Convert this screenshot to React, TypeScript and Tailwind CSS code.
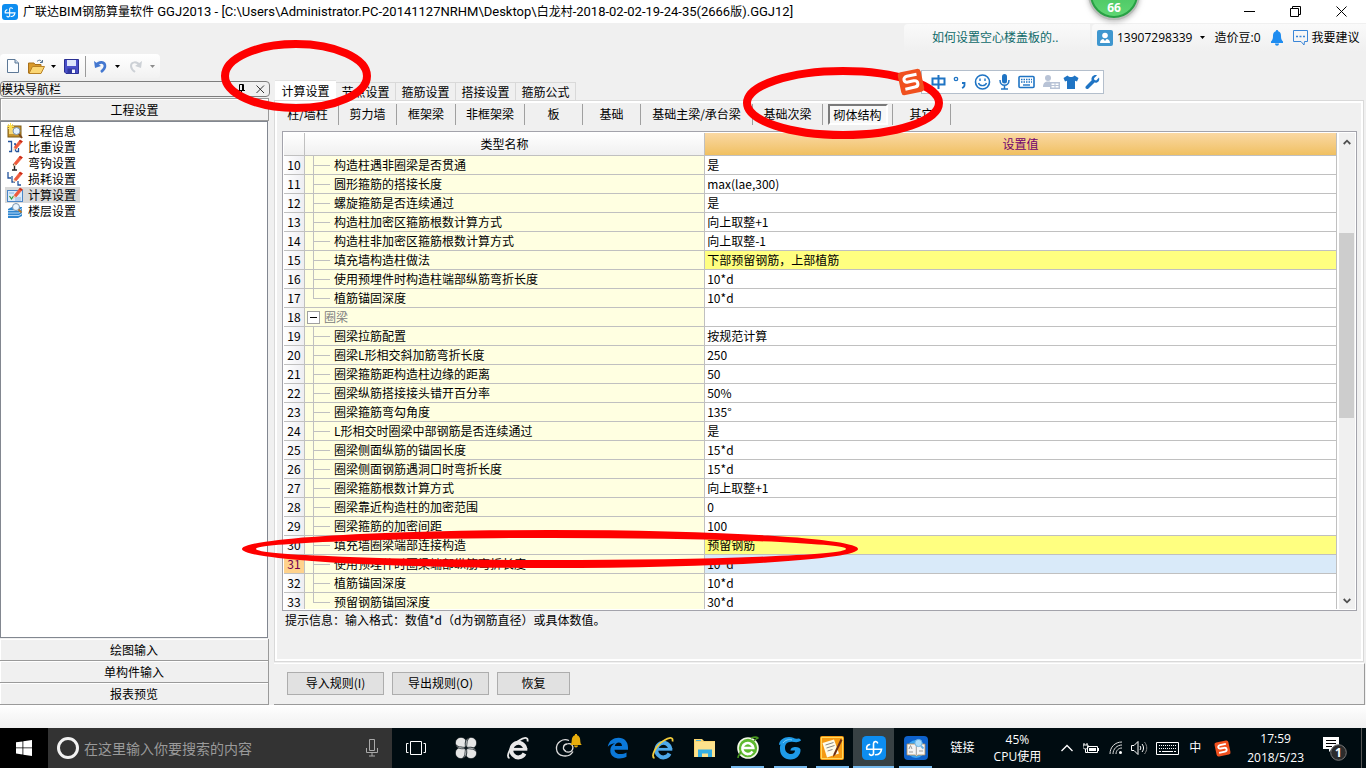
import { useState } from "react"
import type { ReactNode } from "react"

type Row = {
  no: number
  name: string
  value: string
  group?: boolean
  last?: boolean
  changed?: boolean
}

const rows: Row[] = [
  { no: 10, name: "构造柱遇非圈梁是否贯通", value: "是" },
  { no: 11, name: "圆形箍筋的搭接长度", value: "max(lae,300)" },
  { no: 12, name: "螺旋箍筋是否连续通过", value: "是" },
  { no: 13, name: "构造柱加密区箍筋根数计算方式", value: "向上取整+1" },
  { no: 14, name: "构造柱非加密区箍筋根数计算方式", value: "向上取整-1" },
  { no: 15, name: "填充墙构造柱做法", value: "下部预留钢筋，上部植筋", changed: true },
  { no: 16, name: "使用预埋件时构造柱端部纵筋弯折长度", value: "10*d" },
  { no: 17, name: "植筋锚固深度", value: "10*d", last: true },
  { no: 18, name: "圈梁", value: "", group: true },
  { no: 19, name: "圈梁拉筋配置", value: "按规范计算" },
  { no: 20, name: "圈梁L形相交斜加筋弯折长度", value: "250" },
  { no: 21, name: "圈梁箍筋距构造柱边缘的距离", value: "50" },
  { no: 22, name: "圈梁纵筋搭接接头错开百分率", value: "50%" },
  { no: 23, name: "圈梁箍筋弯勾角度", value: "135°" },
  { no: 24, name: "L形相交时圈梁中部钢筋是否连续通过", value: "是" },
  { no: 25, name: "圈梁侧面纵筋的锚固长度", value: "15*d" },
  { no: 26, name: "圈梁侧面钢筋遇洞口时弯折长度", value: "15*d" },
  { no: 27, name: "圈梁箍筋根数计算方式", value: "向上取整+1" },
  { no: 28, name: "圈梁靠近构造柱的加密范围", value: "0" },
  { no: 29, name: "圈梁箍筋的加密间距", value: "100" },
  { no: 30, name: "填充墙圈梁端部连接构造", value: "预留钢筋", changed: true },
  { no: 31, name: "使用预埋件时圈梁端部纵筋弯折长度", value: "10*d" },
  { no: 32, name: "植筋锚固深度", value: "10*d" },
  { no: 33, name: "预留钢筋锚固深度", value: "30*d", last: true },
]

const tabs = ["计算设置", "节点设置", "箍筋设置", "搭接设置", "箍筋公式"]

const categories = [
  { label: "柱/墙柱", width: "w-[62px]" },
  { label: "剪力墙", width: "w-[58px]" },
  { label: "框架梁", width: "w-[59px]" },
  { label: "非框架梁", width: "w-[69px]" },
  { label: "板", width: "w-[58px]" },
  { label: "基础", width: "w-[58px]" },
  { label: "基础主梁/承台梁", width: "w-[112px]" },
  { label: "基础次梁", width: "w-[70px]" },
  { label: "砌体结构", width: "w-[70px]" },
  { label: "其它", width: "w-[58px]" },
]

const Pencil = () => (
  <>
    <path d="M7 8.500 13 1l2.500 1.500L9 10z" fill="#ef5a3c" stroke="#ef5a3c" strokeWidth=".8" />
    <path d="M13 1l2.500 1.500-1 1.200L12 2.300z" fill="#c22a1a" />
    <path d="M7 8.500 9 10l-3 1.800z" fill="#f3c9a0" />
  </>
)

const navItems: { label: string; icon: ReactNode }[] = [
  {
    label: "工程信息",
    icon: (
      <>
        <rect x="1" y="3" width="13" height="11" fill="#c8962e" stroke="#7d5a14" />
        <rect x="2" y="5" width="7" height="6" fill="#f6d878" />
        <circle cx="9.500" cy="8" r="3.500" fill="#e4f2fd" stroke="#7b93ad" />
        <path d="M12 11l3 4" stroke="#7a4a1c" strokeWidth="2" />
        <path d="M3.500 0v7M0 3.500h7M1 1l5 5M6 1L1 6" stroke="#ffe14a" strokeWidth="1" />
      </>
    ),
  },
  {
    label: "比重设置",
    icon: (
      <>
        <path d="M1 2.500h3.500v10H2M8.500 5v7.500M7 5h2M9 12.500h2.500V9" fill="none" stroke="#24549c" strokeWidth="1.300" />
        <Pencil />
      </>
    ),
  },
  {
    label: "弯钩设置",
    icon: (
      <>
        <path d="M5 15h5M7.500 15V8M6 10l3-1" fill="none" stroke="#222" strokeWidth="1.400" />
        <Pencil />
      </>
    ),
  },
  {
    label: "损耗设置",
    icon: (
      <>
        <path d="M1 1v6h3M5 5v6h3M11 10v4h3" fill="none" stroke="#24549c" strokeWidth="1.300" />
        <Pencil />
      </>
    ),
  },
  {
    label: "计算设置",
    icon: (
      <>
        <rect x="0.500" y="3.500" width="15" height="11" fill="#dcebfa" stroke="#4a86c8" />
        <path d="M2 6h5M8 11h6M8 13h6" stroke="#8ab4e0" />
        <path d="M2.500 9l2 3 2-3" fill="none" stroke="#2e9a3c" strokeWidth="1.200" />
        <Pencil />
      </>
    ),
  },
  {
    label: "楼层设置",
    icon: (
      <>
        <path d="M1 6l4-2h10v9l-4 2H1z" fill="#2f86d0" />
        <path d="M1 7.500h11l3-2M1 10h11l3-2M1 12.500h11l3-2" fill="none" stroke="#d4ecff" strokeWidth=".8" />
        <circle cx="9" cy="4" r="3.500" fill="#eaf5fe" stroke="#7b93ad" />
        <path d="M11.500 6.500l3 3" stroke="#b5762a" strokeWidth="2" />
      </>
    ),
  },
]

function CrossLogo({ className }: { className: string }) {
  return (
    <svg viewBox="0 0 24 24" className={className} aria-hidden="true">
      <rect width="24" height="24" rx="4.500" fill="#0d8df0" />
      <path
        d="M7.500 8.600A4 4 0 0 0 4.800 13.300H19.500A6.500 6.500 0 0 1 13.500 18.800M15.500 6.800A2.100 2.100 0 0 0 11.500 7.500V17.500A2.200 2.200 0 0 1 7.400 18.200"
        fill="none"
        stroke="#fff"
        strokeWidth="1.600"
        strokeLinecap="round"
      />
    </svg>
  )
}

function SogouLogo({ className }: { className: string }) {
  return (
    <svg viewBox="0 0 24 24" className={className} aria-hidden="true">
      <g transform="rotate(-12 12 12)">
        <rect x="2" y="2" width="20" height="20" rx="3" fill="#f0501e" />
        <path
          d="M18 6.500H9.500c-4 0-4 5 0 5h5c4 0 4 5.500 0 5.500H6"
          fill="none"
          stroke="#fff"
          strokeWidth="2.600"
        />
      </g>
    </svg>
  )
}

function Caret({ color = "#000" }: { color?: string }) {
  return (
    <svg viewBox="0 0 5 3" className="h-[3px] w-[5px] shrink-0" aria-hidden="true">
      <path d="M0 0h5L2.500 3z" fill={color} />
    </svg>
  )
}

function TitleBar() {
  return (
    <header className="flex h-[23px] shrink-0 items-center bg-white pl-[2px]">
      <CrossLogo className="h-4 w-4 shrink-0" />
      <h1 className="ml-[5px] flex-1 truncate font-['Roboto','Noto_Sans_CJK_SC',sans-serif] text-[13px] leading-[20px]">
        <span className="text-[12px]">广联达</span>BIM<span className="text-[12px]">钢筋算量软件</span> GGJ2013 -
        [C:\Users\Administrator.PC-20141127NRHM\Desktop\<span className="text-[12px]">白龙村</span>
        -2018-02-02-19-24-35(2666<span className="text-[12px]">版</span>).GGJ12]
      </h1>
      <button aria-label="最小化" className="flex h-5 w-[45px] items-center justify-center">
        <svg viewBox="0 0 11 11" className="h-[11px] w-[11px]">
          <path d="M0 5.500h11" stroke="#000" />
        </svg>
      </button>
      <button aria-label="还原" className="flex h-5 w-[46px] items-center justify-center">
        <svg viewBox="0 0 11 11" className="h-[11px] w-[11px]" fill="none" stroke="#000">
          <path d="M.5 2.500h8v8h-8zM2.500 2.500v-2h8v8h-2" />
        </svg>
      </button>
      <button aria-label="关闭" className="mr-[2px] flex h-5 w-[46px] items-center justify-center">
        <svg viewBox="0 0 11 11" className="h-[11px] w-[11px]">
          <path d="M.5.500l10 10M10.500.500l-10 10" stroke="#000" />
        </svg>
      </button>
    </header>
  )
}

function AccountRow() {
  return (
    <div className="flex h-[31px] shrink-0 justify-end gap-[2px] pt-px font-['Open_Sans','Noto_Sans_CJK_SC',sans-serif]">
      <a href="#help" className="h-[27px] w-[186px] rounded-tl bg-linear-to-b from-[#fafafa] to-[#f0f0f0] pl-7 leading-[27px] text-[#0e6a6a]">
        如何设置空心楼盖板的..
      </a>
      <div className="flex h-[27px] w-[274px] items-center rounded-tl bg-linear-to-b from-[#fafafa] to-[#f0f0f0] pl-[5px] whitespace-nowrap">
        <svg viewBox="0 0 16 16" className="h-4 w-4 shrink-0" aria-hidden="true">
          <rect width="16" height="16" rx="2" fill="#3f97cf" />
          <circle cx="8" cy="5.500" r="2.800" fill="#fff" />
          <path d="M3 13c0-3 2-4 3.300-4L8 11l1.700-2c1.300 0 3.300 1 3.300 4z" fill="#fff" />
        </svg>
        <button className="ml-1 flex items-center gap-2">
          13907298339 <Caret />
        </button>
        <span className="ml-[9px]">造价豆:0</span>
        <svg viewBox="0 0 12 16" className="ml-[10px] h-4 w-3 shrink-0" aria-label="消息">
          <path d="M6 0c.8 0 1.200.6 1.200 1.300C9.500 2 10 4 10 6c0 3 .6 4 2 5.500V13H0v-1.500C1.400 10 2 9 2 6c0-2 .5-4 2.800-4.700C4.800.6 5.200 0 6 0z" fill="#1e8cf0" />
          <path d="M4 13.500h4c0 3-4 3-4 0z" fill="#1e8cf0" />
        </svg>
        <button className="ml-[9px] flex items-center gap-[3px]">
          <svg viewBox="0 0 17 16" className="h-4 w-[17px]" fill="none" stroke="#3a86d8" aria-hidden="true">
            <path d="M1.500.5h14v11h-3l-.5 3.500-3-3.500H1.500z" />
            <path d="M4 6.500h2M7.500 6.500h2M11 6.500h2" strokeWidth="1.400" />
          </svg>
          我要建议
        </button>
      </div>
    </div>
  )
}

function Toolbar() {
  return (
    <div className="flex h-6 w-40 shrink-0 items-center rounded bg-linear-to-b from-white to-[#f2f2f2] pl-[7px]">
      <button aria-label="新建">
        <svg viewBox="0 0 12 14" className="h-[14px] w-3">
          <path d="M.5.500H8L11.500 4v9.500H.5z" fill="#fbfdff" stroke="#5d7896" />
          <path d="M8 .5V4h3.500" fill="#c8daee" stroke="#5d7896" />
        </svg>
      </button>
      <button aria-label="打开" className="ml-[9px] flex items-center gap-[6px]">
        <svg viewBox="0 0 17 15" className="h-[15px] w-[17px]">
          <path d="M.5 14V4H6l1 1.500h6V14z" fill="#d99a2c" stroke="#a8701a" />
          <path d="M1 14.500 4.500 7.500h12L13 14.500z" fill="#fbd673" stroke="#b98226" />
          <path d="M9 2.500c2-2 4-1.500 5 .5M14.500 1v2.500H12" fill="none" stroke="#51708f" />
        </svg>
        <Caret />
      </button>
      <button aria-label="保存" className="ml-2">
        <svg viewBox="0 0 15 15" className="h-[15px] w-[15px]">
          <path d="M.5.500h14v14H2L.5 13z" fill="#4a50c8" stroke="#2a2f92" />
          <path d="M3 1h9v6H3z" fill="#dfe6fb" />
          <path d="M3.500 9.500h8v5h-8z" fill="#3038a0" />
          <path d="M8 10.500h3V14H8z" fill="#f3f5ff" />
        </svg>
      </button>
      <span className="ml-[6px] h-[21px] w-px bg-[#9a9a9a]" />
      <button aria-label="撤销" className="ml-2 flex items-center gap-2">
        <svg viewBox="0 0 13 13" className="h-[13px] w-[13px]">
          <path d="M2 5.500C5 1 11 1.500 11 6c0 3-2 4.500-4 6" fill="none" stroke="#4478d0" strokeWidth="2.600" />
          <path d="M0 1l1 7 6-2z" fill="#4478d0" />
        </svg>
        <Caret />
      </button>
      <button aria-label="重做" disabled className="ml-[9px] flex items-center gap-2">
        <svg viewBox="0 0 13 13" className="h-[13px] w-[13px]">
          <path d="M11 5.500C8 1 2 1.500 2 6c0 3 2 4.500 4 6" fill="none" stroke="#cdd1d6" strokeWidth="2" />
          <path d="M13 1l-1 7-6-2z" fill="#cdd1d6" />
        </svg>
        <Caret color="#8c8c8c" />
      </button>
    </div>
  )
}

function NavButton({ children }: { children: ReactNode }) {
  return (
    <button className="h-[22px] w-full shrink-0 border-r border-b border-[#9a9a9a] bg-[#f0f0f0] text-center leading-[20px] shadow-[inset_1px_1px_0_#fff]">
      {children}
    </button>
  )
}

function Sidebar() {
  const [active, setActive] = useState("计算设置")

  return (
    <nav className="flex w-[270px] shrink-0 flex-col pt-px">
      <div className="flex h-4 shrink-0 items-center rounded-sm border border-[#7d7d7d] leading-[12px]">
        <span className="flex-1">模块导航栏</span>
        <button aria-label="固定" className="mr-[10px]">
          <svg viewBox="0 0 9 10" className="h-[10px] w-[9px]" fill="none" stroke="#000">
            <path d="M2.500 6V.500h4V6M5.500 1v5M0 6.500h8M4.500 7v3" />
          </svg>
        </button>
        <button aria-label="关闭导航栏" className="mr-1">
          <svg viewBox="0 0 9 9" className="h-[9px] w-[9px]">
            <path d="M.5.500l7.500 7.500M8 .5L.5 8" stroke="#333" />
          </svg>
        </button>
      </div>
      <button className="mt-px mr-px h-[23px] shrink-0 border border-[#9a9a9a] text-center leading-[20px] shadow-[inset_1px_1px_0_#fff]">
        工程设置
      </button>
      <ul className="mr-[2px] min-h-0 flex-1 border border-[#828790] bg-white px-1 pt-px">
        {navItems.map((item) => (
          <li key={item.label} className="h-4">
            <button
              onClick={() => setActive(item.label)}
              className={`flex h-4 items-center gap-[5px] pr-1 pl-[2px] leading-4 ${active === item.label ? "bg-[#d9d9d9]" : ""}`}
            >
              <svg viewBox="0 0 16 16" className="h-4 w-4" aria-hidden="true">
                {item.icon}
              </svg>
              {item.label}
            </button>
          </li>
        ))}
      </ul>
      <div className="mr-px flex shrink-0 flex-col pt-px">
        <NavButton>绘图输入</NavButton>
        <NavButton>单构件输入</NavButton>
        <NavButton>报表预览</NavButton>
      </div>
    </nav>
  )
}

// tree connector shown left of every child row
function Branch({ last }: { last?: boolean }) {
  return (
    <span className="ml-2 flex w-[17px] shrink-0 flex-col">
      <span className="h-[10px] border-b border-l border-[#c0c0c0]" />
      <span className={`h-2 ${last ? "" : "border-l border-[#c0c0c0]"}`} />
    </span>
  )
}

function SettingsGrid() {
  const [current, setCurrent] = useState(31)

  const valueColor = (row: Row) => {
    if (row.no === current) return "bg-[#d9eaf9]"
    if (row.changed) return "bg-[#ffff80]"
    return "bg-white"
  }

  return (
    <div className="mr-1 ml-[5px] flex min-h-0 flex-1 border border-[#a3a3ab] bg-white p-px">
      <div className="min-w-0 flex-1 overflow-hidden">
        <table className="w-full table-fixed border-separate border-spacing-0">
          <colgroup>
            <col className="w-[21px]" />
            <col />
            <col className="w-[60%]" />
          </colgroup>
          <thead>
            <tr className="h-[23px] leading-[22px]">
              <th className="border-r border-b border-[#c0c0c0] bg-linear-to-b from-white to-[#f0f0f0] p-0" />
              <th className="border-r border-b border-[#c0c0c0] bg-linear-to-b from-white to-[#f0f0f0] p-0 font-normal">
                类型名称
              </th>
              <th className="border-r border-b border-[#c0c0c0] bg-linear-to-b from-[#fad8a2] to-[#f0c060] p-0 font-normal text-[#700070]">
                设置值
              </th>
            </tr>
          </thead>
          <tbody>
            {rows.map((row) => (
              <tr key={row.no} className="h-[19px] leading-[18px]" onClick={() => setCurrent(row.no)}>
                <td
                  className={`border-r border-b border-[#c0c0c0] p-0 text-center ${
                    row.no === current ? "bg-[#ffd28c] text-[#700050]" : "bg-linear-to-r from-white to-[#eeeef2]"
                  }`}
                >
                  {row.no}
                </td>
                <td className="border-r border-b border-[#c0c0c0] bg-[#ffffe1] p-0">
                  <div className="flex h-[18px] items-center overflow-hidden whitespace-nowrap">
                    {row.group ? (
                      <>
                        <button
                          aria-label="折叠"
                          className="mr-1 ml-[2px] flex h-[13px] w-[13px] items-center justify-center border border-[#a0a0a0] bg-white"
                        >
                          <span className="h-px w-[7px] bg-black" />
                        </button>
                        <span className="text-[#808080]">{row.name}</span>
                      </>
                    ) : (
                      <>
                        <Branch last={row.last} />
                        <span className="ml-1">{row.name}</span>
                      </>
                    )}
                  </div>
                </td>
                <td className={`border-r border-b border-[#c0c0c0] p-0 pl-[2px] ${valueColor(row)}`}>{row.value}</td>
              </tr>
            ))}
          </tbody>
        </table>
      </div>
      <div className="ml-[2px] flex w-4 shrink-0 flex-col items-center bg-[#f0f0f0]">
        <button aria-label="向上滚动" className="flex h-[17px] w-full items-center justify-center">
          <svg viewBox="0 0 8 6" className="h-[6px] w-2">
            <path d="M.7 5 4 1.700 7.300 5" fill="none" stroke="#505050" strokeWidth="1.800" />
          </svg>
        </button>
        <div className="flex w-full flex-1 flex-col">
          <div className="grow-[83]" />
          <div className="mr-px grow-[186] bg-[#cdcdcd]" />
          <div className="grow-[174]" />
        </div>
        <button aria-label="向下滚动" className="flex h-[17px] w-full items-center justify-center">
          <svg viewBox="0 0 8 6" className="h-[6px] w-2">
            <path d="M.7 1 4 4.300 7.300 1" fill="none" stroke="#505050" strokeWidth="1.800" />
          </svg>
        </button>
      </div>
    </div>
  )
}

function SettingsPanel() {
  const [tab, setTab] = useState("计算设置")
  const [category, setCategory] = useState("砌体结构")

  return (
    <main className="ml-1 flex min-w-0 flex-1 flex-col">
      <div role="tablist" className="flex h-5 shrink-0 items-end pl-px whitespace-nowrap">
        {tabs.map((label) => (
          <button
            key={label}
            role="tab"
            aria-selected={tab === label}
            onClick={() => setTab(label)}
            className={
              tab === label
                ? "h-5 w-[61px] border-t border-[#e3e3e3] bg-white leading-[18px]"
                : "h-[18px] w-[60px] border-t border-r border-[#d9d9d9] leading-[18px]"
            }
          >
            {label}
          </button>
        ))}
      </div>
      <section className="mr-[2px] flex min-h-0 flex-1 flex-col border border-[#d9d9d9] bg-white p-[2px]">
        <div className="flex min-h-0 flex-1 flex-col bg-[#f0f0f0]">
          <div className="flex h-7 shrink-0 items-start pt-px whitespace-nowrap">
            {categories.map((item) => (
              <div key={item.label} className={`flex h-[21px] justify-center border-r border-[#a0a0a0] ${item.width}`}>
                <button
                  aria-pressed={category === item.label}
                  onClick={() => setCategory(item.label)}
                  className={
                    category === item.label
                      ? "h-[21px] w-[60px] border-2 border-t-[#7a7a7a] border-r-white border-b-white border-l-[#7a7a7a] bg-[#f8f8f8] leading-[17px]"
                      : "h-5 leading-[20px]"
                  }
                >
                  {item.label}
                </button>
              </div>
            ))}
          </div>
          <SettingsGrid />
          <p className="h-12 shrink-0 pl-2 leading-[18px]">提示信息：输入格式：数值*d（d为钢筋直径）或具体数值。</p>
        </div>
      </section>
      <div className="mt-px mr-px flex h-[42px] shrink-0 items-center gap-2 border-t border-r border-b border-t-white border-r-[#9a9a9a] border-b-[#9a9a9a] pb-[2px] pl-[13px]">
        <button className="h-[23px] w-[97px] border border-[#adadad] bg-[#e1e1e1] leading-[20px]">导入规则(I)</button>
        <button className="h-[23px] w-[97px] border border-[#adadad] bg-[#e1e1e1] leading-[20px]">导出规则(O)</button>
        <button className="h-[23px] w-[73px] border border-[#adadad] bg-[#e1e1e1] leading-[20px]">恢复</button>
      </div>
    </main>
  )
}

function ImeBar() {
  return (
    <div className="absolute top-[68px] right-[262px] flex items-center">
      <SogouLogo className="z-10 -mr-1 h-[28px] w-[28px]" />
      <div className="flex h-6 w-[183px] items-center border border-[#b4bfcc] bg-white pl-[9px] text-[#1f74c4]">
        <svg viewBox="0 0 170 18" className="h-[18px] w-[170px]" fill="none" stroke="currentColor" aria-label="输入法工具栏">
          <path d="M1.500 5.500h12v6h-12zM7.500 2v14" strokeWidth="2" />
          <circle cx="25" cy="6" r="1.700" strokeWidth="1.300" />
          <path d="M31 10h2.500v2c0 1.500-1 2.500-2.500 3" strokeWidth="1.800" />
          <circle cx="51.500" cy="9" r="7" strokeWidth="1.600" />
          <path d="M49 5.500v2.500M54 5.500v2.500M47.500 10c1 3.500 7 3.500 8 0" strokeWidth="1.400" />
          <rect x="71" y="1" width="5" height="9.500" rx="2.500" fill="currentColor" stroke="none" />
          <path d="M69 7c0 7 9 7 9 0M73.500 12.500v3.500M70 16h7" strokeWidth="1.500" />
          <rect x="88" y="3.500" width="15" height="11" rx="1" strokeWidth="1.600" />
          <path d="M90 6.500h11M90 9h11" strokeWidth="1.400" strokeDasharray="1.500 1" />
          <path d="M92 12h7" strokeWidth="1.400" />
          <g stroke="none" fill="#b8c3d6">
            <circle cx="117" cy="5" r="3" />
            <path d="M112 14c0-4 2-5.500 5-5.500h2V14z" />
            <path d="M119 9h10v7h-10zM120.500 10.500v1.500h3v-1.500zM124.500 10.500v1.500h3v-1.500zM120.500 13v1.500h3V13zM124.500 13v1.500h3V13z" fillRule="evenodd" />
          </g>
          <path d="M136.500 2.500 132.500 5l1.500 3.500 2-.8V16h8V7.700l2 .8L147.500 5l-4-2.500c-2 2-5 2-7 0z" fill="currentColor" stroke="none" />
          <path
            d="M166 2.200l-3 3 .4 1.800 1.800.4 2.800-3c1 3-1 6-4.500 5.200L157.500 15.500c-1.800 1.500-4-.6-2.700-2.300l5.900-6C159.500 4 163 1 166 2.200z"
            fill="currentColor"
            stroke="none"
          />
        </svg>
      </div>
    </div>
  )
}

function SpeedBall() {
  return (
    <div className="absolute top-[-32px] right-[226px] flex h-[52px] w-[52px] items-end justify-center rounded-full border-2 border-[#b8bcb8] bg-[#28a045] shadow-[0_2px_5px_#8888]">
      <div className="m-[2px] flex h-[44px] w-[44px] items-end justify-center rounded-full bg-linear-to-b from-[#35b855] to-[#5fd673] pb-px font-['Open_Sans',sans-serif] text-[12px] leading-[14px] font-bold text-white">
        66
      </div>
    </div>
  )
}

// red rings drawn by hand over the window
function Marks() {
  return (
    <svg className="pointer-events-none absolute inset-0 h-full w-full" fill="none" stroke="#fe0000" strokeWidth="8" aria-hidden="true">
      <ellipse cx="296" cy="76" rx="71" ry="32" />
      <ellipse cx="843" cy="103" rx="96" ry="32" />
      <path
        d="M242 549a308 19 0 0 1 616 0a308 19 0 0 1-616 0zM256 549a295 11 0 0 0 590 0a295 11 0 0 0-590 0z"
        fill="#fe0000"
        fillRule="evenodd"
        stroke="none"
      />
    </svg>
  )
}

function TaskButton({ label, width, running, active, children }: {
  label: string
  width: string
  running?: boolean
  active?: boolean
  children: ReactNode
}) {
  return (
    <button
      aria-label={label}
      className={`flex h-10 shrink-0 flex-col items-center justify-end ${width} ${active ? "bg-[#374144]" : ""}`}
    >
      <span className="flex flex-1 items-center justify-center pt-[2px]">{children}</span>
      <span className={`h-[2px] ${active ? "w-full" : "w-[33px]"} ${running ? "bg-[#76b9ed]" : ""}`} />
    </button>
  )
}

function BrowserE({ color, ring }: { color: string; ring: string }) {
  return (
    <svg viewBox="0 0 24 24" className="h-6 w-6" fill="none">
      <path d="M19.300 13.500A7 7.300 0 1 0 18.500 17.500" stroke={color} strokeWidth="4" />
      <path d="M7 13.300h14.300" stroke={color} strokeWidth="2.800" />
      <path d="M3.500 22C-1 21 5 9 13 4.500 18 1 22.500.5 21.500 5.500" stroke={ring} strokeWidth="1.800" />
    </svg>
  )
}

function Taskbar() {
  return (
    <footer className="flex h-10 shrink-0 bg-[#000c11] font-['Open_Sans','Noto_Sans_CJK_SC',sans-serif] text-white">
      <button aria-label="开始" className="flex w-12 shrink-0 items-center justify-center bg-black">
        <svg viewBox="0 0 16 16" className="h-4 w-4" fill="#fff">
          <path d="M0 2.300 6.500 1.400v6.100H0zM7.300 1.300 16 0v7.500H7.300zM0 8.300h6.500v6.200L0 13.600zM7.300 8.300H16V16l-8.700-1.300z" />
        </svg>
      </button>
      <label className="flex w-[344px] shrink-0 items-center bg-[#333] pl-[9px]">
        <span className="h-[22px] w-[22px] shrink-0 rounded-full border-[3px] border-[#f2f2f2]" />
        <input
          type="text"
          aria-label="搜索"
          placeholder="在这里输入你要搜索的内容"
          className="ml-[5px] min-w-0 flex-1 bg-transparent text-[14px] text-white outline-none placeholder:text-[#9a9a9a]"
        />
        <svg viewBox="0 0 12 18" className="mr-[14px] h-[18px] w-3 shrink-0" fill="none" stroke="#aaa" aria-hidden="true">
          <path d="M3.500.500h5v11h-5zM.5 9v4.500h11V9M6 13.500V17M3 17h6" />
        </svg>
      </label>
      <TaskButton label="任务视图" width="w-12">
        <svg viewBox="0 0 20 16" className="h-4 w-5" fill="none" stroke="#fff">
          <path d="M4.500 1.500h11v13h-11zM2.500 3.500h-2v9h2M17.500 3.500h2v9h-2" />
        </svg>
      </TaskButton>
      <TaskButton label="四叶草" width="w-[52px]">
        <svg viewBox="0 0 22 22" className="h-[22px] w-[22px]" fill="#e6e6e6" stroke="#000c11" strokeWidth=".7">
          <circle cx="6" cy="6" r="5.700" />
          <circle cx="16" cy="6" r="5.700" />
          <circle cx="16" cy="16" r="5.700" />
          <circle cx="6" cy="16" r="5.700" />
          <path d="M11 11C8 12.500 2 12 .8 7.500 3 11 9 9.500 11 11zM11 11C9.500 8 10 2 14.500.8 11 3 12.500 9 11 11zM11 11c3-1.500 9-1 10.200 3.500C19 11 13 12.500 11 11zM11 11c1.500 3 1 9-3.500 10.200C11 19 9.500 13 11 11z" />
        </svg>
      </TaskButton>
      <TaskButton label="浏览器" width="w-[52px]">
        <BrowserE color="#e9e9e9" ring="#e9e9e9" />
      </TaskButton>
      <TaskButton label="提醒" width="w-[50px]">
        <svg viewBox="0 0 28 26" className="mb-1 h-[26px] w-7">
          <path d="M12 11c4-1.500 7 2 5.500 5.500-1.500 3.500-7 3.500-8.500 0M14 7.500C8 5 1 9 1.500 16c.5 8 12.500 9.500 16.500 2.500M12 11c-4 0-5 6-1 7" fill="none" stroke="#ddd" strokeWidth="1.300" />
          <path d="M15 12c2-1 1.500-4 2-6.500.5-2 1.700-3 3-3.200V1h2v1.300c1.300.2 2.500 1.200 3 3.200.5 2.500 0 5.500 2 6.500z" fill="#e8ae0c" />
          <path d="M19 12.500h4c0 2.500-4 2.500-4 0z" fill="#e8ae0c" />
        </svg>
      </TaskButton>
      <TaskButton label="Edge" width="w-[48px]">
        <svg viewBox="0 0 22 22" className="h-[22px] w-[22px]">
          <path
            d="M.8 9.700C2 3.500 6.500.8 11.500.8 17.500.8 21 5 21 10.500v2.200H7.500c.2 5 7.500 5.500 12 2.800v4.300C13 23.300 3.300 21.500 3.300 13.500c0-3.500 2-6 4.700-7.300C4.500 6.500 2.300 8 .8 9.700zM7.800 9H15c0-5-6.500-4.500-7.200 0z"
            fill="#0b78d8"
          />
        </svg>
      </TaskButton>
      <TaskButton label="Internet Explorer" width="w-[42px]">
        <BrowserE color="#4ea9ea" ring="#f2cc3c" />
      </TaskButton>
      <TaskButton label="文件资源管理器" width="w-[42px]">
        <svg viewBox="0 0 22 18" className="h-[18px] w-[22px]">
          <path d="M0 0h8l2 2h11v16H0z" fill="#f9d671" />
          <path d="M1 3h20v15H1z" fill="#fde28c" />
          <path d="M2 1h5v1H2z" fill="#4cb4dc" />
          <path d="M4 18v-7.500h14V18h-4v-3.500H8V18z" fill="#35aee2" />
        </svg>
      </TaskButton>
      <TaskButton label="安全浏览器" width="w-[43px]" running>
        <svg viewBox="0 0 24 24" className="h-6 w-6">
          <circle cx="12" cy="12" r="10" fill="#5db92f" stroke="#f4fbe9" strokeWidth="1.600" />
          <path d="M16.500 15.500A5.500 5.500 0 1 1 17.300 12H7" fill="none" stroke="#fff" strokeWidth="2.600" />
          <path d="M2 22C2 18 5 19 4 16M15 2c3-1 6-1 7 0-1 1-3 1-4 3" fill="none" stroke="#46961e" strokeWidth="1.600" />
        </svg>
      </TaskButton>
      <TaskButton label="工作台" width="w-[42px]" running>
        <svg viewBox="0 0 24 24" className="h-6 w-6">
          <path
            d="M1 9C1 4 6 1 11 1c4 0 6 2.500 9 1.500 1.500-.4 2.500.5 3 2-3 2.500-6 1.500-9 1.300C9 5.500 7 8.500 7 12c0 3.500 2.500 6 6 6 2.500 0 4-1.500 4-3.500-1.500-.3-3 .2-4.500 0C12.500 12 15 11 17.500 11c3 0 4.500 1 5 2.500.5 5-4 10-10 10C6 23.500 2 19 2 13c0-1-.3-1.500.5-4.500z"
            fill="#1e9be8"
          />
          <path d="M5 7c2-3 6-4 9-3" fill="none" stroke="#7fd0fa" />
        </svg>
      </TaskButton>
      <TaskButton label="便笺" width="w-[42px]" running>
        <svg viewBox="0 0 24 24" className="h-6 w-6">
          <rect width="24" height="24" rx="2" fill="#f59a12" />
          <rect x="1.500" y="1.500" width="21" height="21" fill="none" stroke="#ffd85a" />
          <path d="M2.500 7 14 3.500l5 14L7 21.500z" fill="#fffbe8" />
          <path d="M5.500 9l8-2.500M6.500 12l8-2.500M7.500 15l5-1.500" stroke="#888" />
          <path d="M13.500 18 20.500 3l2 1-7 14.500-2.500 2.500z" fill="#6b2d12" />
        </svg>
      </TaskButton>
      <TaskButton label="钢筋算量软件" width="w-[41px]" running active>
        <CrossLogo className="h-6 w-6" />
      </TaskButton>
      <TaskButton label="词典" width="w-[43px]" running>
        <svg viewBox="0 0 24 24" className="h-6 w-6">
          <rect width="24" height="24" rx="4" fill="#0e62cc" />
          <circle cx="12" cy="13" r="9" fill="#3aa6f4" />
          <path d="M3 8h8.500l1 1 1-1H21v11h-7l-1.500 1-1.500-1H3z" fill="#f4f4f4" stroke="#b88a50" strokeWidth=".8" />
          <path d="M12.300 9v10M5 13l1.500-3.500L8 13M15 15h4M5 16h4" stroke="#999" fill="none" />
          <circle cx="14.500" cy="7" r="3.600" fill="#a8dcfb" stroke="#6fb4e4" />
          <path d="M17 10l2.500 2.500" stroke="#6fb4e4" strokeWidth="1.800" />
        </svg>
      </TaskButton>
      <div className="flex min-w-0 flex-1 items-center justify-end whitespace-nowrap">
        <a href="#links" className="text-[12px]">
          链接
        </a>
        <div className="ml-[19px] text-center text-[12px] leading-[17px]">
          <div>45%</div>
          <div>CPU使用</div>
        </div>
        <button aria-label="显示隐藏的图标" className="ml-[20px]">
          <svg viewBox="0 0 12 8" className="h-2 w-3">
            <path d="M.5 7 6 1.500 11.500 7" fill="none" stroke="#fff" strokeWidth="1.300" />
          </svg>
        </button>
        <svg viewBox="0 0 17 13" className="ml-[10px] h-[13px] w-[17px]" aria-label="电源">
          <path d="M4.500 4.500h10v6h-10zM15.500 6v3" fill="none" stroke="#fff" />
          <path d="M6 6h7v3H6z" fill="#fff" />
          <path d="M1 1v2M4 1v2M0 3h5v2.500L3.500 7h-2L0 5.500zM2.500 7v3.500h2" fill="none" stroke="#fff" />
        </svg>
        <svg viewBox="0 0 14 14" className="ml-[9px] h-[14px] w-[14px]" fill="none" stroke="#ddd" aria-label="网络">
          <path d="M1 13C1 6 6 1 13 1M4 13c0-5 4-9 9-9M7 13c0-3.500 2.500-6 6-6" />
          <circle cx="11.500" cy="11.500" r="1.500" fill="#fff" stroke="none" />
        </svg>
        <svg viewBox="0 0 17 14" className="ml-2 h-[14px] w-[17px]" fill="none" stroke="#fff" aria-label="音量">
          <path d="M.5 4.500H3l4-4v13l-4-4H.5zM9 5c1 1.500 1 2.500 0 4M11 3c2 2.500 2 5.500 0 8" />
          <path d="M13.500 1c3 4 3 8 0 12" stroke="#888" />
        </svg>
        <svg viewBox="0 0 23 13" className="ml-2 h-[13px] w-[23px]" fill="none" stroke="#fff" aria-label="触摸键盘">
          <path d="M.5.500h22v12H.5z" />
          <path d="M3 3.500h17M3 6.500h17" strokeDasharray="1 1" />
          <path d="M3 9.500h2M6 9.500h11M18 9.500h2" />
        </svg>
        <button className="ml-[10px] text-[12px]">中</button>
        <SogouLogo className="ml-[13px] h-[17px] w-[17px]" />
        <div className="ml-4 text-center text-[12px] leading-[19px]">
          <div>17:59</div>
          <div>2018/5/23</div>
        </div>
        <button aria-label="操作中心" className="mr-[13px] ml-[19px]">
          <svg viewBox="0 0 25 25" className="h-[25px] w-[25px]">
            <path d="M0 1h16v12H9l-3 3v-3H0z" fill="#fff" />
            <path d="M3 4.500h10M3 7.500h10M3 10.500h6" stroke="#000" />
            <circle cx="15.500" cy="16.500" r="7.800" fill="#2c2c2c" stroke="#777" />
            <text x="15.500" y="21" textAnchor="middle" fontSize="12" fontWeight="bold" fill="#fff">
              1
            </text>
          </svg>
        </button>
        <span className="mr-1 h-10 w-px bg-[#555]" />
      </div>
    </footer>
  )
}

export default function App() {
  return (
    <div className="relative flex h-screen flex-col overflow-hidden bg-[#f0f0f0] font-['Noto_Sans_CJK_SC',sans-serif] text-[12px] text-black">
      <TitleBar />
      <AccountRow />
      <Toolbar />
      <div className="mt-[2px] flex min-h-0 flex-1">
        <Sidebar />
        <SettingsPanel />
      </div>
      <div className="h-[23px] shrink-0 bg-linear-to-b from-white to-[#f0f0f0]" />
      <Taskbar />
      <ImeBar />
      <SpeedBall />
      <Marks />
    </div>
  )
}
